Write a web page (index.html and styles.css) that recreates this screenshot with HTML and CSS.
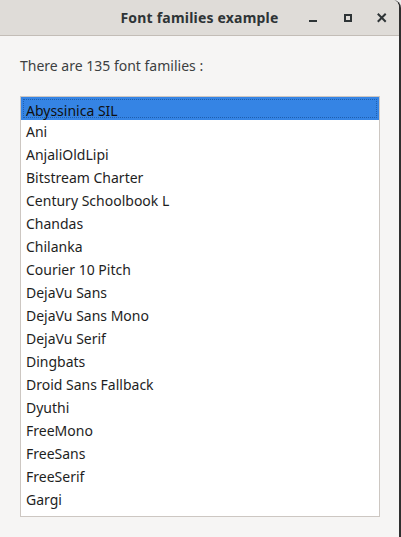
FILE: index.html
```html
<!DOCTYPE html>
<html lang="en">
<head>
<meta charset="utf-8">
<title>Font families example</title>
<link rel="stylesheet" href="styles.css">
</head>
<body>
<div class="window">
  <header class="titlebar">
    <span class="title">Font families example</span>
    <div class="controls">
      <span class="ctl">
        <svg width="16" height="16" viewBox="0 0 16 16"><rect x="4" y="11" width="8" height="2" fill="#2e3436"/></svg>
      </span>
      <span class="ctl">
        <svg width="16" height="16" viewBox="0 0 16 16"><rect x="5" y="6" width="6" height="6" fill="none" stroke="#2e3436" stroke-width="2"/></svg>
      </span>
      <span class="ctl">
        <svg width="16" height="16" viewBox="0 0 16 16"><path d="M4.5 5.5 L11 12 M11 5.5 L4.5 12" stroke="#2e3436" stroke-width="2" stroke-linecap="square"/></svg>
      </span>
    </div>
  </header>
  <main class="content">
    <p class="label">There are 135 font families :</p>
    <ul class="list">
      <li class="item selected"><span class="focus">Abyssinica SIL</span></li>
      <li class="item">Ani</li>
      <li class="item">AnjaliOldLipi</li>
      <li class="item">Bitstream Charter</li>
      <li class="item">Century Schoolbook L</li>
      <li class="item">Chandas</li>
      <li class="item">Chilanka</li>
      <li class="item">Courier 10 Pitch</li>
      <li class="item">DejaVu Sans</li>
      <li class="item">DejaVu Sans Mono</li>
      <li class="item">DejaVu Serif</li>
      <li class="item">Dingbats</li>
      <li class="item">Droid Sans Fallback</li>
      <li class="item">Dyuthi</li>
      <li class="item">FreeMono</li>
      <li class="item">FreeSans</li>
      <li class="item">FreeSerif</li>
      <li class="item">Gargi</li>
    </ul>
  </main>
</div>
</body>
</html>
```
FILE: styles.css
```css
html, body {
  margin: 0;
  padding: 0;
  background: #ecebea;
}
body {
  font-family: "Noto Sans", "Open Sans", sans-serif;
  width: 401px;
  height: 537px;
  overflow: hidden;
}
.window {
  box-sizing: border-box;
  width: 401px;
  height: 537px;
  background: #f6f5f4;
  border-right: 2px solid #2f2f2f;
  border-top-right-radius: 8px;
  display: flex;
  flex-direction: column;
  overflow: hidden;
}
.titlebar {
  box-sizing: border-box;
  height: 36px;
  flex: none;
  background: #dfdcd8;
  border-bottom: 1px solid #c3bdb7;
  display: flex;
  align-items: center;
  justify-content: center;
  position: relative;
}
.title {
  font-weight: bold;
  font-size: 14px;
  color: #2e3436;
  letter-spacing: 0.2px;
}
.controls {
  position: absolute;
  right: 9px;
  top: 9px;
  display: flex;
  gap: 18.5px;
}
.ctl {
  display: block;
  width: 16px;
  height: 16px;
}
.ctl svg { display: block; }
.content {
  flex: 1;
  padding: 20px 19px 20px 20px;
  display: flex;
  flex-direction: column;
}
.label {
  margin: 0;
  font-size: 14px;
  line-height: 20px;
  color: #3d3f41;
}
.list {
  list-style: none;
  margin: 20px 0 0 0;
  padding: 0;
  width: 360px;
  height: 421px;
  box-sizing: border-box;
  border: 1px solid #cdc7c2;
  background: #ffffff;
  overflow: hidden;
}
.item {
  box-sizing: border-box;
  height: 23px;
  padding-top: 1px;
  line-height: 22px;
  padding-left: 5px;
  font-size: 14px;
  color: #1e1e1e;
  white-space: nowrap;
}
.item.selected {
  background: #3584e4;
  padding: 2px;
}
.focus {
  display: block;
  height: 19px;
  line-height: 19px;
  padding-top: 1px;
  padding-left: 2px;
  border: 1px dotted #1f5fae;
  box-sizing: border-box;
  color: #101010;
}
```
